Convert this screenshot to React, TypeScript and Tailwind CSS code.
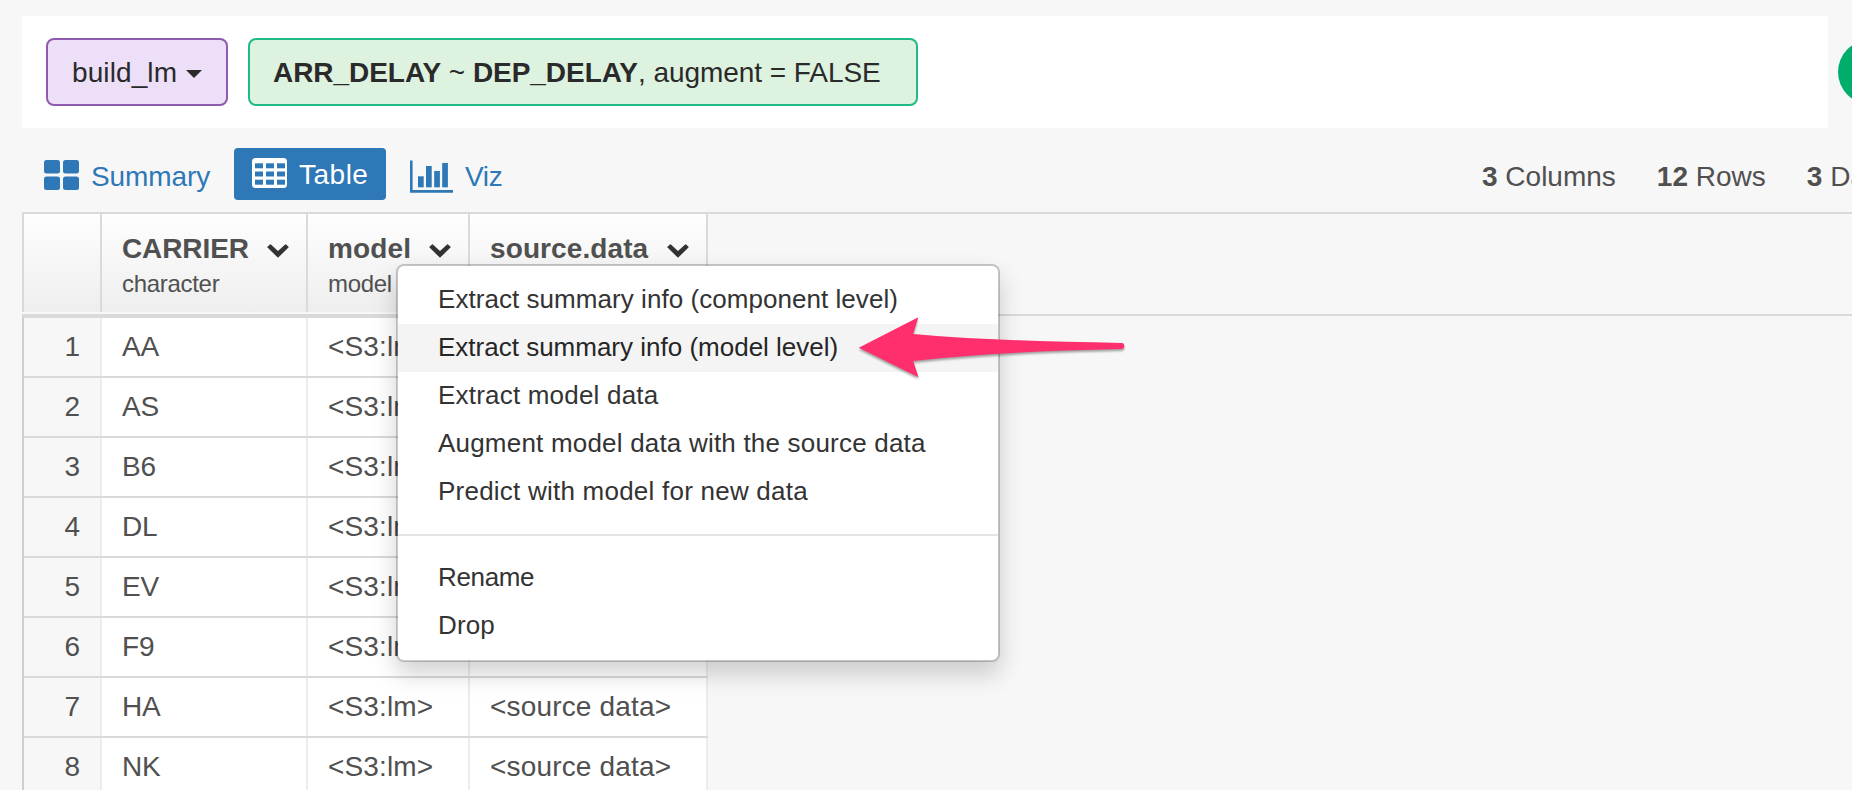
import type { ReactNode } from 'react';

const COLUMNS = [
  { name: 'CARRIER', type: 'character', spacing: 'tracking-[-0.1px]' },
  { name: 'model', type: 'model', spacing: 'tracking-[0.15px]' },
  { name: 'source.data', type: 'source.data', spacing: 'tracking-[0.1px]' },
];

const CARRIERS = ['AA', 'AS', 'B6', 'DL', 'EV', 'F9', 'HA', 'NK'];

const MODEL_ACTIONS = [
  { label: 'Extract summary info (component level)', spacing: 'tracking-[0.05px]' },
  { label: 'Extract summary info (model level)', spacing: 'tracking-normal' },
  { label: 'Extract model data', spacing: 'tracking-[0.2px]' },
  { label: 'Augment model data with the source data', spacing: 'tracking-[0.2px]' },
  { label: 'Predict with model for new data', spacing: 'tracking-[0.23px]' },
];

const COLUMN_ACTIONS = [
  { label: 'Rename', spacing: 'tracking-[-0.35px]' },
  { label: 'Drop', spacing: 'tracking-[0.1px]' },
];

function ChevronIcon() {
  return (
    <svg className="mt-[3px] h-[14px] w-[22px] shrink-0" viewBox="0 0 22 14" fill="#333">
      <path d="M0.5 3.6Q0.1 3.1 0.5 2.700L2.900 0.400Q3.400 0 3.900 0.400L11 7L18.100 0.400Q18.600 0 19.100 0.400L21.500 2.700Q21.900 3.100 21.500 3.600L11.500 13.300Q11 13.700 10.500 13.300Z" />
    </svg>
  );
}

function SummaryIcon() {
  return (
    <svg className="h-[30px] w-[35px]" viewBox="0 0 35 30" fill="#2e78b7">
      <rect x="0" y="0" width="16" height="13.6" rx="2.5" />
      <rect x="19" y="0" width="16" height="13.6" rx="2.5" />
      <rect x="0" y="16.4" width="16" height="13.6" rx="2.5" />
      <rect x="19" y="16.4" width="16" height="13.6" rx="2.5" />
    </svg>
  );
}

function TableIcon() {
  const xs = [3, 14, 25];
  const ys = [5.3, 13.5, 21.7];
  return (
    <svg className="mb-[2px] h-[30px] w-[35px]" viewBox="0 0 35 30">
      <rect width="35" height="30" rx="3.5" fill="#fff" />
      {ys.map((y) =>
        xs.map((x) => <rect key={`${x}-${y}`} x={x} y={y} width="8" height="5" fill="#2e78b7" />),
      )}
    </svg>
  );
}

function VizIcon() {
  return (
    <svg className="h-[33px] w-[43px]" viewBox="0 0 43 33" fill="#2e78b7">
      <path d="M0 0.5H2.6V30H43V32.7H0Z" />
      <rect x="8" y="16.3" width="5.7" height="11" />
      <rect x="16" y="6" width="5.7" height="21.3" />
      <rect x="24.2" y="11" width="5.7" height="16.3" />
      <rect x="32.2" y="3" width="5.7" height="24.3" />
    </svg>
  );
}

function Stat({ value, children }: { value: string; children: ReactNode }) {
  return (
    <span className="whitespace-nowrap">
      <b>{value}</b> {children}
    </span>
  );
}

function MenuItem({ label, spacing, active }: { label: string; spacing: string; active?: boolean }) {
  const tone = active ? 'bg-[#f4f4f4] text-[#262626]' : 'text-[#333]';
  return (
    <li className={`h-12 pl-10 text-[26px] leading-[46px] whitespace-nowrap ${tone} ${spacing}`}>{label}</li>
  );
}

function CommandBar() {
  return (
    <div className="flex gap-[10px] pt-4 pl-[22px]">
      <div className="flex h-28 w-[1806px] shrink-0 items-start gap-5 bg-white px-6 pt-[22px] text-[28px] leading-[66px] text-[#2a2a2a]">
        <button className="flex h-[68px] w-[182px] items-center rounded-lg border-2 border-[#8e5bae] bg-[#ecdff7] pl-6">
          <span className="pt-[2px] leading-[64px] tracking-[0.1px]">build_lm</span>
          <svg className="mt-[3px] ml-[9px] h-2 w-4" viewBox="0 0 16 8" fill="#2a2a2a">
            <path d="M0 0H16L8 8Z" />
          </svg>
        </button>
        <div className="h-[68px] w-[670px] rounded-lg border-2 border-[#1dbb85] bg-[#def2e0] pl-[23px] tracking-[-0.05px] whitespace-nowrap">
          <b>ARR_DELAY</b> ~ <b>DEP_DELAY</b>, augment = FALSE
        </div>
      </div>
      <div className="mt-6 size-16 shrink-0 rounded-full bg-[#00ad6b]" />
    </div>
  );
}

function Toolbar() {
  return (
    <div className="flex h-[84px] items-start pl-11 text-[28px] text-[#2e78b7]">
      <div className="flex w-[190px] pt-8">
        <SummaryIcon />
        <span className="ml-3 pt-[1px] leading-8 tracking-[-0.1px]">Summary</span>
      </div>
      <div className="mt-5 flex h-[52px] w-[152px] items-center rounded bg-[#2e78b7] pl-[18px] text-white">
        <TableIcon />
        <span className="ml-3 pt-[2px] leading-[50px] tracking-[0.5px]">Table</span>
      </div>
      <div className="ml-6 flex pt-8">
        <VizIcon />
        <span className="ml-3 pt-[1px] leading-8 tracking-[-0.3px]">Viz</span>
      </div>
      <div className="mt-[33px] ml-auto flex w-[370px] shrink-0 gap-[41px] overflow-hidden leading-8 text-[#505050]">
        <Stat value="3">Columns</Stat>
        <Stat value="12">Rows</Stat>
        <Stat value="3">Da</Stat>
      </div>
    </div>
  );
}

function DataTable() {
  return (
    <div className="ml-[22px] text-[#505050]">
      <div className="border-t-2 border-[#dadada]">
        <div className="grid h-[98px] w-[686px] grid-cols-[78px_206px_162px_238px] border-l-2 border-[#dadada] bg-linear-to-b from-[#fefefe] to-[#eeeeee]">
          <div className="border-r-2 border-[#dadada]" />
          {COLUMNS.map((column) => (
            <div key={column.name} className="border-r-2 border-[#dadada] pt-[19px] pr-[17px] pl-5">
              <div className="flex items-center justify-between">
                <span className={`text-[28px] leading-8 font-bold ${column.spacing}`}>{column.name}</span>
                <ChevronIcon />
              </div>
              <div className="pt-[3px] text-[24px] leading-8 tracking-[-0.3px]">{column.type}</div>
            </div>
          ))}
        </div>
      </div>
      <div className="mt-[2px] border-t-2 border-[#dadada]">
        <div className="w-[686px] border-t-2 border-l-2 border-t-[#dadada] border-l-[#cfcfcf]">
          {CARRIERS.map((carrier, i) => (
            <div
              key={carrier}
              className="grid h-[60px] grid-cols-[78px_206px_162px_238px] border-b-2 border-[#dadada] bg-white text-[28px] leading-[58px]"
            >
              <div className="border-r-2 border-[#ececec] bg-[#f7f7f7] pr-[20px] text-right">{i + 1}</div>
              <div className="border-r-2 border-[#ececec] pl-5 tracking-[-0.2px]">{carrier}</div>
              <div className="border-r-2 border-[#ececec] pl-5 tracking-[0.15px]">&lt;S3:lm&gt;</div>
              <div className="border-r-2 border-[#ececec] pl-5 tracking-[0.17px]">&lt;source data&gt;</div>
            </div>
          ))}
        </div>
      </div>
    </div>
  );
}

function ColumnMenu() {
  return (
    <ul className="absolute top-[264px] left-[396px] w-[604px] rounded-lg border-2 border-black/20 bg-white bg-clip-padding py-[10px] shadow-[0_12px_24px_rgba(0,0,0,0.18)]">
      {MODEL_ACTIONS.map((action, i) => (
        <MenuItem key={action.label} label={action.label} spacing={action.spacing} active={i === 1} />
      ))}
      <li className="my-[18px] h-[2px] bg-[#e5e5e5]" />
      {COLUMN_ACTIONS.map((action) => (
        <MenuItem key={action.label} label={action.label} spacing={action.spacing} />
      ))}
    </ul>
  );
}

function PointerArrow() {
  return (
    <svg
      className="absolute top-[310px] left-[850px] h-[80px] w-[290px] drop-shadow-[0_2px_1px_rgba(0,0,0,0.35)]"
      viewBox="850 310 290 80"
      fill="#ff2f6d"
    >
      <path d="M858.8 347.7L918.3 317.3L913.2 334C980 340 1050 341.500 1121.500 343Q1124.300 343.200 1124.300 346Q1124.300 348.800 1121.500 349C1050 350.500 980 353.500 913.200 361L918.500 377.200Z" />
    </svg>
  );
}

export default function App() {
  return (
    <div className="relative h-[790px] w-full overflow-hidden bg-[#f7f7f7] font-['Liberation_Sans',Arial,sans-serif]">
      <CommandBar />
      <Toolbar />
      <DataTable />
      <ColumnMenu />
      <PointerArrow />
    </div>
  );
}
